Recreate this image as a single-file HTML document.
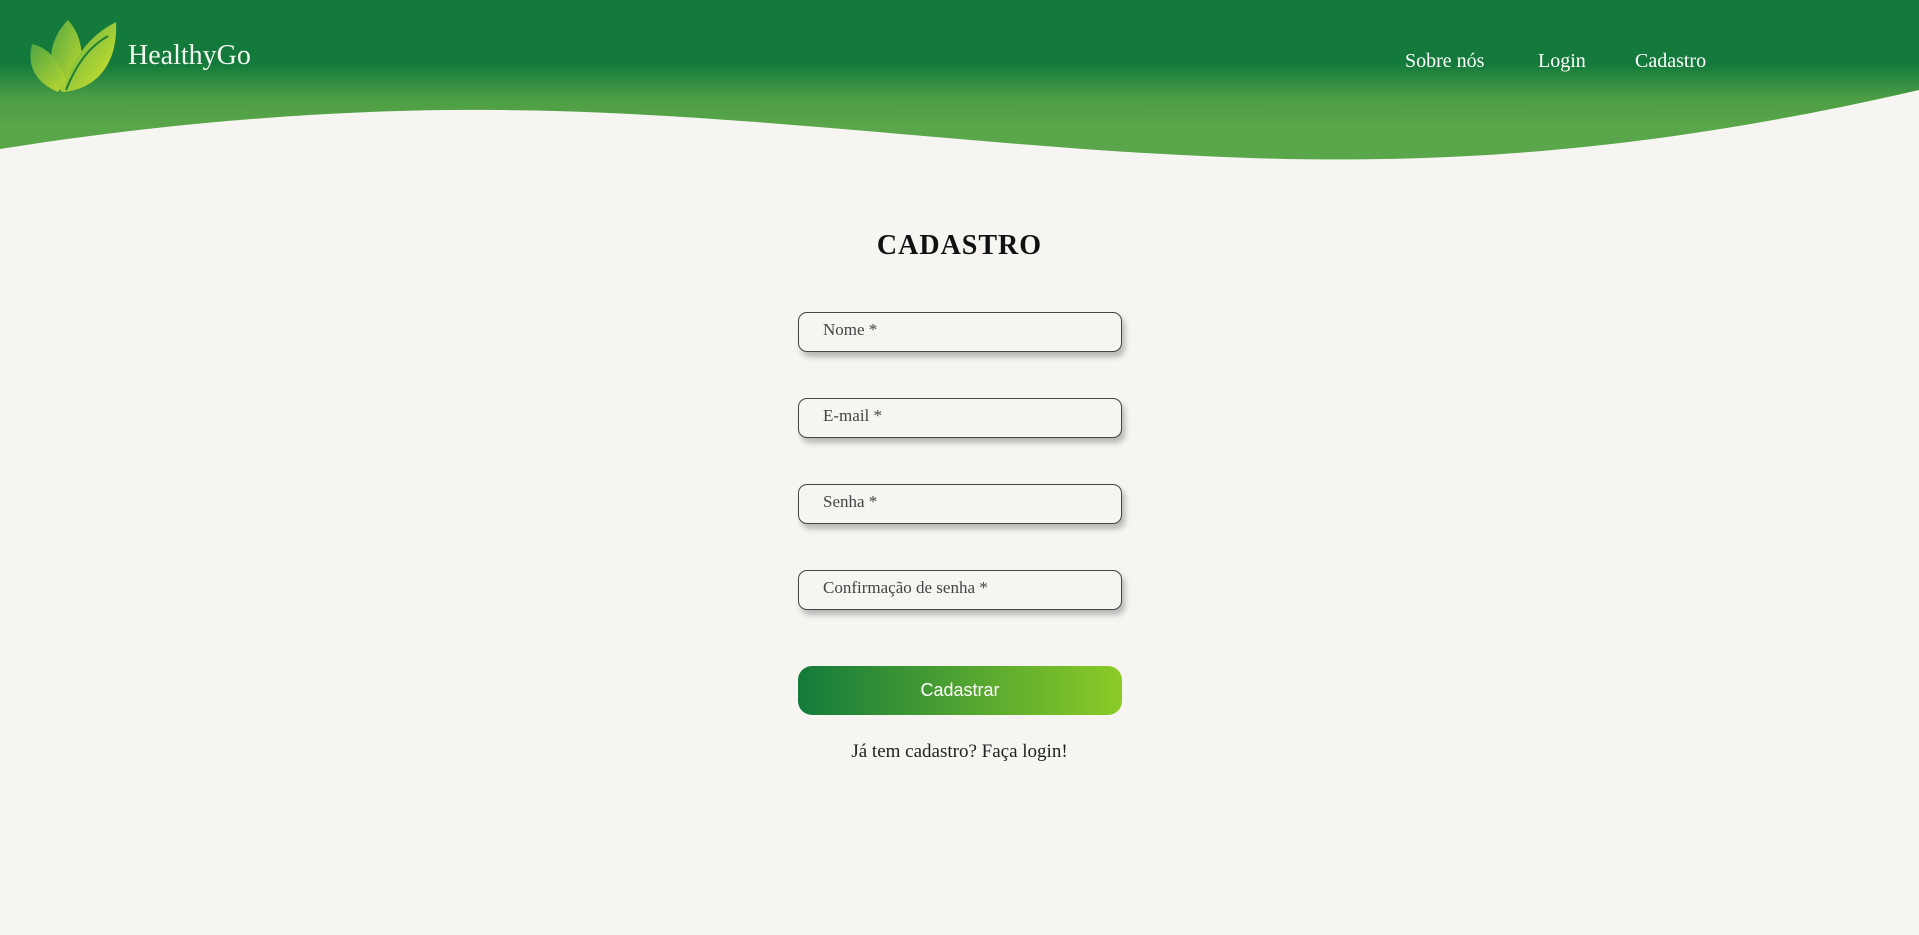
<!DOCTYPE html>
<html><head><meta charset="utf-8"><style>
body{margin:0;width:1919px;height:935px;background:#f6f5f2;font-family:"Liberation Serif",serif;position:relative;overflow:hidden}
.nav a{position:absolute;top:50px;color:#fff;font-size:20px;text-decoration:none}
.logo{position:absolute;left:128px;top:40px;color:#f2f7ee;font-size:28px;font-family:"Liberation Serif",serif}
h1{position:absolute;top:230px;left:0;width:1919px;text-align:center;margin:0;font-size:28px;letter-spacing:1px;color:#111}
.in{position:absolute;left:798px;width:322px;height:38px;border:1.3px solid #444;border-radius:9px;box-shadow:3px 5px 6px rgba(0,0,0,.25);background:#f6f5f2}
.in span{position:absolute;left:24px;top:7px;font-size:17px;color:#444}
.btn{position:absolute;left:798px;top:666px;width:324px;height:49px;border-radius:14px;background:linear-gradient(90deg,#137a3b,#8ccb27);color:#fff;font-family:"Liberation Sans",sans-serif;font-size:18px;text-align:center;line-height:49px}
.lk{position:absolute;top:741px;left:0;width:1919px;text-align:center;font-size:19px;color:#222}
</style></head><body>
<svg width="1919" height="170" style="position:absolute;left:0;top:0">
<defs><linearGradient id="g" x1="0" y1="0" x2="0" y2="1"><stop offset="0" stop-color="#137a3b"/><stop offset=".4" stop-color="#137a3b"/><stop offset=".62" stop-color="#4d9e45"/><stop offset=".8" stop-color="#5aa64a"/><stop offset="1" stop-color="#5aa64a"/></linearGradient>
<linearGradient id="lf" x1="0" y1="0" x2="1" y2="1"><stop offset="0" stop-color="#5cae45"/><stop offset="1" stop-color="#d8e62a"/></linearGradient></defs>
<path d="M0 149 C150 125 330 108 500 110 C750 112 1000 150 1250 158 C1500 166 1700 140 1919 90 L1919 0 L0 0Z" fill="url(#g)"/>
<path d="M58 92 C30 80 28 60 32 44 C50 48 60 64 66 80Z" fill="url(#lf)" opacity=".85"/>
<path d="M62 92 C45 70 48 40 68 20 C84 38 86 64 74 90Z" fill="url(#lf)" opacity=".9"/>
<path d="M64 92 C70 60 90 35 116 22 C118 60 100 88 64 92Z" fill="url(#lf)"/>
<path d="M66 90 C78 60 92 45 108 36" stroke="#1e7d36" stroke-width="2" fill="none"/>
</svg>
<div class="logo">HealthyGo</div>
<div class="nav"><a style="left:1405px">Sobre nós</a><a style="left:1538px">Login</a><a style="left:1635px">Cadastro</a></div>
<h1>CADASTRO</h1>
<div class="in" style="top:312px"><span>Nome *</span></div>
<div class="in" style="top:398px"><span>E-mail *</span></div>
<div class="in" style="top:484px"><span>Senha *</span></div>
<div class="in" style="top:570px"><span>Confirmação de senha *</span></div>
<div class="btn">Cadastrar</div>
<div class="lk">Já tem cadastro? Faça login!</div>
</body></html>
